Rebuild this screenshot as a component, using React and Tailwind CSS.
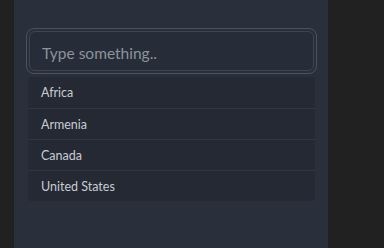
import { useState } from 'react';

const countries = ['Africa', 'Armenia', 'Canada', 'United States'];

export default function App() {
  const [query, setQuery] = useState('');

  return (
    <div className="flex h-[248px] w-[384px] bg-[#202020] font-['Lato','Noto_Sans',sans-serif]">
      <div className="w-[14px] bg-[#212121]" />
      {/* Panel */}
      <div className="w-[314px] bg-[#2a303b] pl-[12px] pr-[11px] pt-[28px]">
        <div className="rounded-[8px] border border-[#4a5261] p-[2px]">
          <input
            value={query}
            onChange={(e) => setQuery(e.target.value)}
            placeholder="Type something.."
            autoFocus
            className="h-[40px] w-full rounded-[6px] border border-[#3d4452] bg-[#272d38] px-[12px] pt-[3px] text-[15.5px] text-[#c9cdd3] placeholder-[#8d939c] outline-none"
          />
        </div>
        <ul className="ml-[2px] mr-[2px] mt-[3px] overflow-hidden rounded-[4px] bg-[#242934]">
          {countries.map((name, i) => (
            <li
              key={name}
              className={`flex h-[31px] items-center px-[13px] pt-[2px] text-[12.5px] text-[#c8ccd2] ${
                i > 0 ? 'border-t border-[#30363f]' : ''
              }`}
            >
              {name}
            </li>
          ))}
        </ul>
      </div>
      <div className="flex-1 bg-[#212121]" />
    </div>
  );
}
